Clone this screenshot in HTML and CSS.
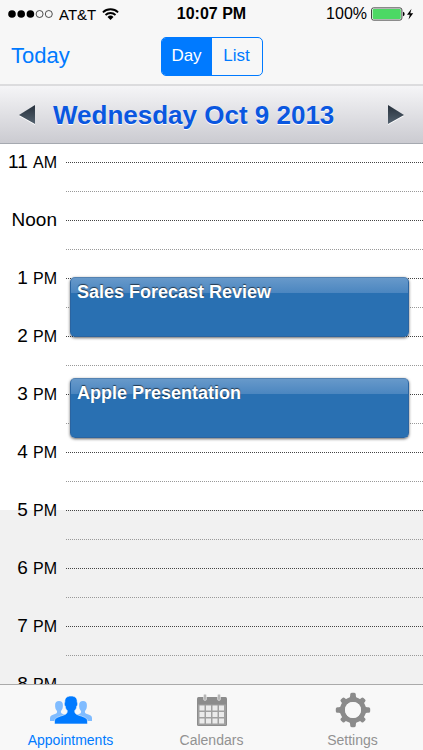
FILE: index.html
```html
<!DOCTYPE html>
<html lang="en">
<head>
  <meta charset="UTF-8" />
  <meta name="viewport" content="width=device-width, initial-scale=1" />
  <title>Appointments</title>
  <link rel="stylesheet" href="styles.css">
</head>
<body>
<header class="top">
  <div class="status-bar">
    <div class="carrier">
      <svg width="45" height="10" viewBox="0 0 45 10">
        <circle cx="4" cy="5" r="3.8"/>
        <circle cx="13.2" cy="5" r="3.8"/>
        <circle cx="22.4" cy="5" r="3.8"/>
        <g fill="none" stroke="#222" stroke-width="0.8">
          <circle cx="31.6" cy="5" r="3.5"/>
          <circle cx="40.8" cy="5" r="3.5"/>
        </g>
      </svg>
      <span>AT&amp;T</span>
      <svg width="17" height="12" viewBox="0 0 17 12">
        <g fill="none" stroke="#000" stroke-width="1.8">
          <path d="M0.9 4.3 A11 11 0 0 1 16.1 4.3"/>
          <path d="M3.5 7 A7.2 7.2 0 0 1 13.5 7"/>
        </g>
        <path d="M8.5 12 L5.5 9 A4.3 4.3 0 0 1 11.5 9 Z"/>
      </svg>
    </div>
    <div class="clock">10:07 PM</div>
    <div class="battery">
      <span>100%</span>
      <svg width="44" height="14" viewBox="0 0 44 14">
        <rect x="0.5" y="0.9" width="30.4" height="12.2" rx="2" fill="#fff" stroke="#444"/>
        <rect x="1.6" y="2" width="28.2" height="10" rx="1" fill="#4cd964"/>
        <path d="M32 4.8 A2.3 2.3 0 0 1 32 9.2 Z"/>
        <path d="M40.5 1.8 L36 7.8 H38.8 L37.5 12.4 L42.2 6.2 H39.3 Z"/>
      </svg>
    </div>
  </div>
  <nav class="nav-bar">
    <button class="today">Today</button>
    <div class="segments">
      <button class="segment selected">Day</button>
      <button class="segment">List</button>
    </div>
  </nav>
</header>

<div class="date-bar">
  <button class="arrow" aria-label="Previous day">
    <svg width="18" height="20" viewBox="0 0 18 20">
      <defs>
        <linearGradient id="arrowFill" x1="0" y1="0" x2="0" y2="1">
          <stop offset="0" stop-color="#27313c"/>
          <stop offset="1" stop-color="#53616f"/>
        </linearGradient>
      </defs>
      <path d="M17 1 V20 L1 11 Z" fill="#fff"/>
      <path d="M17 0 V19 L1 10 Z" fill="url(#arrowFill)"/>
    </svg>
  </button>
  <h1>Wednesday Oct 9 2013</h1>
  <button class="arrow" aria-label="Next day">
    <svg width="18" height="20" viewBox="0 0 18 20">
      <path d="M1 1 V20 L17 11 Z" fill="#fff"/>
      <path d="M1 0 V19 L17 10 Z" fill="url(#arrowFill)"/>
    </svg>
  </button>
</div>

<main class="schedule">
  <div class="hours">
    <div class="hour"><div class="time">11 <small>AM</small></div><div class="lines"></div></div>
    <div class="hour"><div class="time">Noon</div><div class="lines"></div></div>
    <div class="hour"><div class="time">1 <small>PM</small></div><div class="lines"></div></div>
    <div class="hour"><div class="time">2 <small>PM</small></div><div class="lines"></div></div>
    <div class="hour"><div class="time">3 <small>PM</small></div><div class="lines"></div></div>
    <div class="hour"><div class="time">4 <small>PM</small></div><div class="lines"></div></div>
    <div class="hour closing"><div class="time">5 <small>PM</small></div><div class="lines"></div></div>
    <div class="hour closed"><div class="time">6 <small>PM</small></div><div class="lines"></div></div>
    <div class="hour closed"><div class="time">7 <small>PM</small></div><div class="lines"></div></div>
    <div class="hour closed"><div class="time">8 <small>PM</small></div><div class="lines"></div></div>
  </div>
  <a href="#sales" class="event sales">Sales Forecast Review</a>
  <a href="#apple" class="event apple">Apple Presentation</a>
</main>

<footer class="tab-bar">
  <a href="#appointments" class="tab active">
    <svg width="44" height="36" viewBox="0 0 44 36">
      <g fill="#80bcff">
        <path id="person" d="M1 29 V26 C1 23.5 3 23 6 22 C8 21.3 8.3 20.5 8 19 C6.6 17.5 6 15.5 6.1 13 C6.1 10.5 7.5 9 10 9 C12.5 9 13.9 10.5 13.9 13 C14 15.5 13.4 17.5 12 19 C11.7 20.5 12 21.3 14 22 C17 23 19 23.5 19 26 V29 Z"/>
        <use href="#person" x="24"/>
      </g>
      <path d="M5.5 32 V29 C5.5 26 9 25 13 23.6 C17 22.3 18.5 21.5 18.2 18.5 C17 17.5 16.4 16 16.2 14 C15.2 13.8 15 10.5 15.8 10.2 C15.5 6 18 4 22 4 C26 4 28.5 6 28.2 10.2 C29 10.5 28.8 13.8 27.8 14 C27.6 16 27 17.5 25.8 18.5 C25.5 21.5 27 22.3 31 23.6 C35 25 38.5 26 38.5 29 V32 Z" fill="#007aff" stroke="#f8f8f8" stroke-width="0.6"/>
    </svg>
    Appointments
  </a>
  <a href="#calendars" class="tab">
    <svg width="32" height="36" viewBox="0 0 32 36">
      <rect x="1" y="5" width="30" height="29" rx="1.5" fill="#8c8c8c"/>
      <rect x="2" y="12.5" width="28" height="20.5" fill="#a0a0a0"/>
      <g fill="#ebebeb">
        <path d="M3.5 13.5h5v5h-5zM10 13.5h5v5h-5zM16.5 13.5h5v5h-5zM23 13.5h5v5h-5z"/>
        <path d="M3.5 20h5v5h-5zM10 20h5v5h-5zM16.5 20h5v5h-5zM23 20h5v5h-5z"/>
        <path d="M3.5 26.5h5v5h-5zM10 26.5h5v5h-5zM16.5 26.5h5v5h-5zM23 26.5h5v5h-5z"/>
      </g>
      <g fill="#b5b5b5" stroke="#f0f0f0" stroke-width="0.5">
        <rect x="7.5" y="2" width="3" height="6.5" rx="1.5"/>
        <rect x="21.5" y="2" width="3" height="6.5" rx="1.5"/>
      </g>
    </svg>
    Calendars
  </a>
  <a href="#settings" class="tab">
    <svg width="36" height="36" viewBox="-18 -18 36 36">
      <g fill="#8b8b8b">
        <g id="teeth">
          <path id="tooth" d="M-4.5 -11 C-3 -12.5 -2.8 -13.5 -2.8 -15.5 Q-2.8 -17.2 -1.2 -17.2 H1.2 Q2.8 -17.2 2.8 -15.5 C2.8 -13.5 3 -12.5 4.5 -11 Z"/>
          <use href="#tooth" transform="rotate(90)"/>
          <use href="#tooth" transform="rotate(180)"/>
          <use href="#tooth" transform="rotate(270)"/>
        </g>
        <use href="#teeth" transform="rotate(45) scale(0.93)"/>
      </g>
      <circle r="10.5" fill="none" stroke="#8b8b8b" stroke-width="5"/>
      <circle r="8" fill="#f8f8f8"/>
    </svg>
    Settings
  </a>
</footer>
</body>
</html>
```

FILE: styles.css
```css
* {
  box-sizing: border-box;
}
body {
  margin: 0;
  height: 100vh;
  display: flex;
  flex-direction: column;
  font-family: "Liberation Sans", Arial, sans-serif;
  background: #fff;
  color: #000;
}
button {
  border: none;
  background: none;
  padding: 0;
  font-family: inherit;
  cursor: pointer;
}
svg {
  display: block;
}
.top {
  background: #f7f7f7;
}
.status-bar, .nav-bar {
  display: grid;
  grid-template-columns: 1fr auto 1fr;
  align-items: center;
}
.status-bar {
  height: 28px;
  padding: 0 8px;
  font-size: 16px;
}
.carrier, .battery {
  display: flex;
  align-items: center;
  gap: 4px;
}
.carrier {
  font-size: 15px;
  gap: 6px;
}
.battery {
  justify-content: flex-end;
}
.clock {
  font-weight: bold;
}
.nav-bar {
  height: 56px;
  padding: 0 11px;
}
.today {
  justify-self: start;
  font-size: 22px;
  color: #007aff;
}
.segments {
  display: flex;
  width: 102px;
  height: 39px;
  border: 1px solid #007aff;
  border-radius: 5px;
  overflow: hidden;
}
.segment {
  flex: 1;
  font-size: 17px;
  color: #007aff;
}
.segment.selected {
  background: #007aff;
  color: #fff;
}

.date-bar {
  display: flex;
  align-items: center;
  gap: 17px;
  height: 60px;
  padding: 0 18px;
  border-top: 2px solid #dcdcde;
  border-bottom: 1px solid #a5a9b0;
  background: linear-gradient(#f5f5f7, #cbcbd1);
}
.date-bar h1 {
  flex: 1;
  margin: 0;
  font-size: 26px;
  line-height: 30px;
  white-space: nowrap;
  color: #0a57e0;
  text-shadow: 0 1px 0 #fff;
}

.schedule {
  position: relative;
  flex: 1;
  min-height: 0;
  overflow: hidden;
}
/* first hour is scrolled slightly under the date bar */
.hours {
  margin-top: -11px;
}
.hour {
  display: flex;
  align-items: center;
  height: 58px;
}
.time {
  width: 57px;
  margin-right: 9px;
  text-align: right;
  font-size: 19px;
  white-space: nowrap;
}
.time small {
  font-size: 16px;
}
.lines {
  flex: 1;
  height: 58px;
  border-top: 1px dotted #999;
}
.lines::after {
  content: "";
  display: block;
  margin-top: 28px;
  border-top: 1px dotted #444;
}
.closing {
  background: linear-gradient(#fff 50%, #f1f1f1 50%);
}
.closed {
  background: #f1f1f1;
}
.event {
  position: absolute;
  left: 70px;
  right: 14px;
  height: 60px;
  padding: 4px 6px;
  border: 1px solid #2b64a0;
  border-top-color: #5482b1;
  border-radius: 5px;
  background: linear-gradient(#6799ca, #4b86c0 15px, #2970b2 15px, #2970b2);
  box-shadow: 0 1px 3px rgba(0,0,0,0.6);
  color: #fff;
  font-size: 18px;
  font-weight: bold;
  line-height: 20px;
  text-decoration: none;
  text-shadow: 0 -1px 1px rgba(0,0,0,0.6);
}
.sales {
  top: 133px;
}
.apple {
  top: 234px;
}

.tab-bar {
  display: flex;
  height: 66px;
  border-top: 1px solid #aaa;
  background: #f8f8f8;
}
.tab {
  flex: 1;
  display: flex;
  flex-direction: column;
  align-items: center;
  gap: 4px;
  padding-top: 7px;
  font-size: 14px;
  line-height: 16px;
  color: #929292;
  text-decoration: none;
}
.tab.active {
  color: #007aff;
}
```
